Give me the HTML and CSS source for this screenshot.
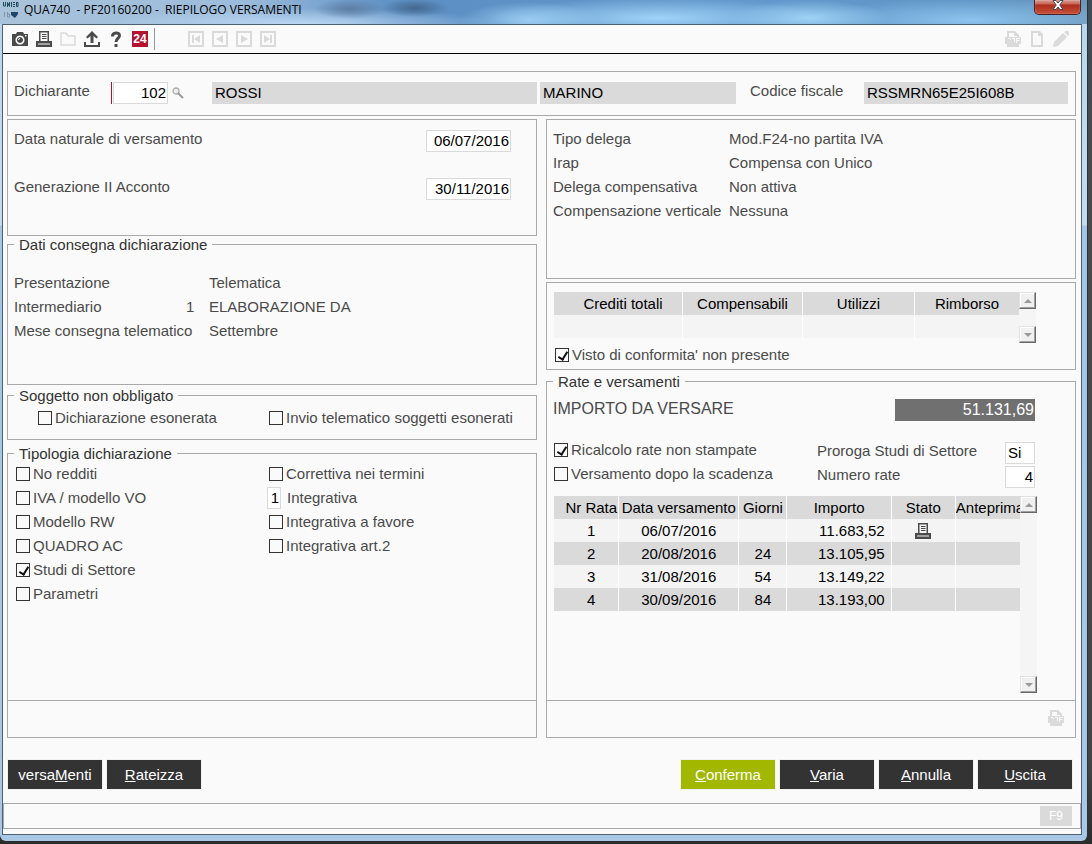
FILE: index.html
```html
<!DOCTYPE html>
<html lang="it">
<head>
<meta charset="utf-8">
<title>QUA740 - Riepilogo versamenti</title>
<link rel="stylesheet" href="styles.css">
</head>
<body>
<svg class="defs" aria-hidden="true">
  <symbol id="i-printer" viewBox="0 0 16 16">
    <path fill="currentColor" fill-rule="evenodd" d="M3 0h10v10h3v6H0v-6h3zM4.500 1.500v8.500h7v-8.500zM2 12.500v1h12v-1z"/>
    <path stroke="currentColor" d="M6 3.500h4.500M6 5.500h4.500M6 7.500h4.500"/>
  </symbol>
  <symbol id="i-pdf" viewBox="0 0 16 16">
    <path fill="currentColor" fill-rule="evenodd" d="M2 0h8l4 4v2h2v7h-2v3H2v-3H0V6h2zM4 2v4h8V5H9V2z"/>
    <path stroke="#fafafa" fill="none" d="M3 7.500h2M5.500 8v1M7 7.500h3M9.500 8v3M11.500 12V7.500H15M12 9.500h2.500"/>
  </symbol>
</svg>
<div class="window">
  <header class="titlebar">
    <svg class="app-icon" width="16" height="16" viewBox="0 0 16 16"><path stroke="#1f4a5c" fill="none" d="M.5 0v4h2V0M4.500 5V.5l2 4V0M8.500 0v5M10 .5h2M10 2.500h2M10 4.500h2M13.500 0v4.500h1.500V.5h-1"/><path stroke="#7d93a8" fill="none" d="M1.500 10v5M4.500 10v5h2v-3h-2"/><path fill="#1f4668" d="M8 10h7v2l-3 4-4-3z"/></svg>
    <h1>QUA740&nbsp; - PF20160200 -&nbsp; RIEPILOGO VERSAMENTI</h1>
    <button class="close" aria-label="Chiudi"><svg width="12" height="10" viewBox="0 0 12 10"><path d="M1 .5h3l2 2.500 2-2.500h3L7.800 5l3.200 4.500H8L6 7 4 9.500H1L4.200 5z" fill="#fff" stroke="#4a4550" stroke-width="1"/></svg></button>
  </header>
  <div class="client">
    <nav class="toolbar">
      <div class="tools">
        <button aria-label="Cattura"><svg viewBox="0 0 16 16"><path fill="currentColor" fill-rule="evenodd" d="M0 3h4l1-2h6l1 2h4v12H0zM8 4.500a4.500 4.500 0 1 0 .01 0zM8 6a3 3 0 1 1-.01 0zM13 4v1.500h1.500V4z"/><path stroke="#fafafa" fill="none" d="M6.500 9A1.500 1.500 0 0 1 8 7.500"/></svg></button>
        <button aria-label="Stampa"><svg><use href="#i-printer"/></svg></button>
        <button class="off" aria-label="Apri"><svg viewBox="0 0 16 16"><path fill="none" stroke="currentColor" stroke-width="1.500" d="M1 2h5l2 3h7v9H1z"/></svg></button>
        <button aria-label="Esporta"><svg viewBox="0 0 16 16"><path fill="currentColor" d="M8 0l6 6-1.500 1.500L9.500 5v7h-3V5l-3 2.500L2 6zM0 11h2v3h12v-3h2v5H0z"/></svg></button>
        <button aria-label="Aiuto"><svg viewBox="0 0 16 16"><path fill="none" stroke="currentColor" stroke-width="3" d="M4.500 5.500C4.300 .800 11.700 .800 11.500 4.800 11.400 7.500 8 7.500 8 11"/><path fill="currentColor" d="M6.500 13h3v3h-3z"/></svg></button>
        <button class="f24">24</button>
      </div>
      <div class="tools off records">
        <button aria-label="Primo"><svg viewBox="0 0 16 16"><path fill="none" stroke="currentColor" stroke-width="2" d="M1 1h14v14H1z"/><path fill="currentColor" d="M4 4h2v8H4zM12 4v8L6 8z"/></svg></button>
        <button aria-label="Precedente"><svg viewBox="0 0 16 16"><path fill="none" stroke="currentColor" stroke-width="2" d="M1 1h14v14H1z"/><path fill="currentColor" d="M11 4v8L4 8z"/></svg></button>
        <button aria-label="Successivo"><svg viewBox="0 0 16 16"><path fill="none" stroke="currentColor" stroke-width="2" d="M1 1h14v14H1z"/><path fill="currentColor" d="M5 4v8l7-4z"/></svg></button>
        <button aria-label="Ultimo"><svg viewBox="0 0 16 16"><path fill="none" stroke="currentColor" stroke-width="2" d="M1 1h14v14H1z"/><path fill="currentColor" d="M10 4h2v8h-2zM4 4v8l6-4z"/></svg></button>
      </div>
      <div class="tools off end">
        <button aria-label="PDF"><svg><use href="#i-pdf"/></svg></button>
        <button aria-label="Nuovo"><svg viewBox="0 0 16 16"><path fill="currentColor" fill-rule="evenodd" d="M2 0h9l3 3v13H2zM4 2v12h8V5H9V2z"/></svg></button>
        <button aria-label="Modifica"><svg viewBox="0 0 16 16"><path fill="currentColor" d="M0 16l1-5L10 2l4 4-9 9zM11 1l1.500-1H15l1 1v2.500L15 5z"/></svg></button>
      </div>
    </nav>

    <main>
      <section class="box declarant">
        <label for="dich">Dichiarante</label>
        <span class="key"><input id="dich" class="num" value="102"></span>
        <button class="lens" aria-label="Cerca"><svg width="12" height="12" viewBox="0 0 12 12"><circle cx="4" cy="4" r="3" fill="#eee" stroke="#aaa" stroke-width="1.300"/><path stroke="#999" stroke-width="2" d="M6 6l5 5"/></svg></button>
        <input class="ro surname" aria-label="Cognome" readonly value="ROSSI">
        <input class="ro name" aria-label="Nome" readonly value="MARINO">
        <label class="code-label" for="cf">Codice fiscale</label>
        <input id="cf" class="ro" readonly value="RSSMRN65E25I608B">
      </section>

      <div class="columns">
        <div class="column">
          <section class="box dates">
            <div class="row"><label for="d1">Data naturale di versamento</label><input id="d1" class="num" value="06/07/2016"></div>
            <div class="row"><label for="d2">Generazione II Acconto</label><input id="d2" class="num" value="30/11/2016"></div>
          </section>
          <fieldset class="delivery">
            <legend>Dati consegna dichiarazione</legend>
            <dl>
              <dt>Presentazione</dt><dd></dd><dd>Telematica</dd>
              <dt>Intermediario</dt><dd>1</dd><dd>ELABORAZIONE DA</dd>
              <dt>Mese consegna telematico</dt><dd></dd><dd>Settembre</dd>
            </dl>
          </fieldset>
          <fieldset class="exempt">
            <legend>Soggetto non obbligato</legend>
            <div class="pair">
              <label class="check inset"><input type="checkbox">Dichiarazione esonerata</label>
              <label class="check"><input type="checkbox">Invio telematico soggetti esonerati</label>
            </div>
          </fieldset>
          <fieldset class="kind grow">
            <legend>Tipologia dichiarazione</legend>
            <div class="pair">
              <div>
                <label class="check"><input type="checkbox">No redditi</label>
                <label class="check"><input type="checkbox">IVA / modello VO</label>
                <label class="check"><input type="checkbox">Modello RW</label>
                <label class="check"><input type="checkbox">QUADRO AC</label>
                <label class="check"><input type="checkbox" checked>Studi di Settore</label>
                <label class="check"><input type="checkbox">Parametri</label>
              </div>
              <div>
                <label class="check"><input type="checkbox">Correttiva nei termini</label>
                <label class="check"><input class="num digit" value="1">Integrativa</label>
                <label class="check"><input type="checkbox">Integrativa a favore</label>
                <label class="check"><input type="checkbox">Integrativa art.2</label>
              </div>
            </div>
            <div class="foot"></div>
          </fieldset>
        </div>

        <div class="column">
          <section class="box options">
            <dl>
              <dt>Tipo delega</dt><dd>Mod.F24-no partita IVA</dd>
              <dt>Irap</dt><dd>Compensa con Unico</dd>
              <dt>Delega compensativa</dt><dd>Non attiva</dd>
              <dt>Compensazione verticale</dt><dd>Nessuna</dd>
            </dl>
          </section>
          <section class="box credits">
            <div class="grid-wrap">
              <table>
                <colgroup><col class="w128"><col class="w120"><col class="w112"><col class="w105"></colgroup>
                <thead><tr><th class="n">Crediti totali</th><th>Compensabili</th><th>Utilizzi</th><th>Rimborso</th></tr></thead>
                <tbody><tr><td></td><td></td><td></td><td></td></tr></tbody>
              </table>
              <div class="scroll"><button class="up" aria-label="Su"></button><button class="down" aria-label="Giù"></button></div>
            </div>
            <label class="check"><input type="checkbox" checked>Visto di conformita' non presente</label>
          </section>
          <fieldset class="rates grow">
            <legend>Rate e versamenti</legend>
            <div class="total"><label for="tot">IMPORTO DA VERSARE</label><input id="tot" readonly value="51.131,69"></div>
            <div class="settings">
              <label class="check"><input type="checkbox" checked>Ricalcolo rate non stampate</label>
              <label for="pro">Proroga Studi di Settore</label><input id="pro" value="Si">
              <label class="check"><input type="checkbox">Versamento dopo la scadenza</label>
              <label for="nr">Numero rate</label><input id="nr" class="num" value="4">
            </div>
            <div class="grid-wrap grow">
              <table>
                <colgroup><col class="w64"><col class="w120"><col class="w48"><col class="w104"><col class="w64"><col class="w65"></colgroup>
                <thead><tr><th class="r">Nr Rata</th><th>Data versamento</th><th>Giorni</th><th>Importo</th><th>Stato</th><th class="l">Anteprima</th></tr></thead>
                <tbody>
                  <tr><td class="n">1</td><td>06/07/2016</td><td></td><td class="amount">11.683,52</td><td><svg class="state" width="16" height="16"><use href="#i-printer"/></svg></td><td></td></tr>
                  <tr><td class="n">2</td><td>20/08/2016</td><td>24</td><td class="amount">13.105,95</td><td></td><td></td></tr>
                  <tr><td class="n">3</td><td>31/08/2016</td><td>54</td><td class="amount">13.149,22</td><td></td><td></td></tr>
                  <tr><td class="n">4</td><td>30/09/2016</td><td>84</td><td class="amount">13.193,00</td><td></td><td></td></tr>
                </tbody>
              </table>
              <div class="scroll"><button class="up" aria-label="Su"></button><button class="down" aria-label="Giù"></button></div>
            </div>
            <div class="foot"><button class="pdf" aria-label="PDF"><svg width="16" height="16"><use href="#i-pdf"/></svg></button></div>
          </fieldset>
        </div>
      </div>

      <div class="actions">
        <button>versa<u>M</u>enti</button>
        <button><u>R</u>ateizza</button>
        <button class="primary"><u>C</u>onferma</button>
        <button><u>V</u>aria</button>
        <button><u>A</u>nnulla</button>
        <button><u>U</u>scita</button>
      </div>
    </main>
    <footer class="status"><button>F9</button></footer>
  </div>
</div>
</body>
</html>
```
FILE: styles.css
```css
* { box-sizing: border-box; }
body {
  margin: 0;
  min-height: 100vh;
  display: flex;
  padding: 0 4px 3px 0;
  background: linear-gradient(#3c4b58, #4a4a4a 20%, #454545 90%, #2c2c2c);
  font: 15px/24px "Liberation Sans", Arial, sans-serif;
  color: #4a4a4a;
}
button, input { font: inherit; margin: 0; padding: 0; border: 0; border-radius: 0; }
button { background: none; }
.defs { position: absolute; width: 0; height: 0; }

.window {
  flex: 1;
  display: flex;
  flex-direction: column;
  padding: 0 5px 6px 2px;
  border-radius: 0 0 6px 6px;
  border-right: 1px solid #26323c;
  background: linear-gradient(#b9d6ee, #c4dcf0 225px, #a3c6e6 226px, #a9c8e6);
}
.titlebar {
  display: flex;
  align-items: flex-start;
  height: 24px;
  margin: 0 -5px 0 -2px;
  padding: 0 6px 0 3px;
  background:
    radial-gradient(ellipse 36px 10px at 350px 9px, #5d7ea3 0, transparent 100%),
    radial-gradient(ellipse 34px 9px at 415px 8px, #44688f 0, transparent 100%),
    radial-gradient(ellipse 70px 18px at 530px 20px, #9bcdf2, transparent),
    radial-gradient(ellipse 170px 20px at 660px 18px, #9fd3f8, transparent),
    radial-gradient(ellipse 80px 18px at 810px 18px, #9fd3f5, transparent),
    radial-gradient(ellipse 160px 22px at 970px 20px, #8cc4ee, transparent),
    radial-gradient(ellipse 200px 16px at 300px 24px, #bcd8f4, transparent),
    linear-gradient(90deg, #a9c3da, #9cbcdc 240px, #5c8fc3 400px, #6298cc 70%, #5e94c4 90%, #6e97b8);
}
.titlebar h1 {
  flex: 1;
  margin: 0 0 0 5px;
  font: 12px/20px "Open Sans", "Noto Sans", sans-serif;
  color: #000;
}
.app-icon { margin-top: 2px; }
.close {
  display: flex;
  justify-content: center;
  width: 47px;
  height: 15px;
  border: 1px solid #46222a;
  border-top: 0;
  border-radius: 0 0 5px 5px;
  background: linear-gradient(#d9a096, #c5604f 30%, #ad2c1c 35%, #c8503a);
  box-shadow: inset 0 0 1px #fff;
}

.client {
  flex: 1;
  display: flex;
  flex-direction: column;
  border: 1px solid #4d6072;
  background: #fafafa;
  padding-bottom: 5px;
}
.toolbar {
  display: flex;
  align-items: center;
  height: 29px;
  padding: 0 12px 0 9px;
  border-bottom: 1px solid #000;
}
.tools { display: flex; gap: 8px; color: #4a4a4a; }
.tools button { display: block; width: 16px; height: 16px; color: inherit; }
.tools svg { display: block; width: 16px; height: 16px; }
.tools.off, .tools .off { color: #dadada; }
.tools .f24 {
  background: #b4122f;
  color: #fff;
  font-size: 12px;
  font-weight: bold;
  line-height: 16px;
  text-align: center;
}
.records { margin-left: 6px; padding-left: 33px; border-left: 1px solid #999; height: 22px; align-items: center; }
.end { margin-left: auto; }

main {
  flex: 1;
  display: flex;
  flex-direction: column;
  padding: 17px 5px 13px 4px;
}
.box, fieldset { border: 1px solid #a9a9a9; margin: 0; min-width: 0; }
input:not([type=checkbox]) {
  height: 22px;
  padding: 0 1px 1px 2px;
  border: 1px solid #dadada;
  background: #fff;
  color: #000;
}
input.num { text-align: right; }
input.ro { background: #dadada; }

.declarant { display: flex; padding: 10px 7px 11px 6px; }
.declarant label { line-height: 18px; white-space: nowrap; }
.declarant label:first-child { width: 97px; }
.key { display: flex; padding-left: 1px; border-left: 1px solid #b4122f; }
.key input { width: 55px; }
.lens { margin: 5px 28px 0 4px; height: 12px; line-height: 0; }
.surname { flex: 327 1 0; min-width: 0; }
.name { flex: 195 1 0; min-width: 0; margin: 0 14px 0 3px; }
.declarant .code-label { width: 114px; }
#cf { width: 204px; }

.columns {
  flex: 1;
  display: grid;
  grid-template-columns: 1fr 1fr;
  gap: 9px;
  margin-top: 3px;
}
.column { display: flex; flex-direction: column; min-width: 0; }
.grow { flex: 1; }
fieldset { display: flex; flex-direction: column; padding: 0 6px; }
legend { padding: 0 5px; line-height: 17px; color: #333; }
dl { display: grid; margin: 0; white-space: nowrap; }
dd { margin: 0; }

.dates { display: grid; gap: 24px; padding: 8px 25px 35px 6px; }
.row { display: flex; justify-content: space-between; height: 24px; }
.row label { line-height: 22px; }
.row input { width: 85px; align-self: flex-end; }
.delivery { padding: 18px 6px 41px; }
.delivery dl { grid-template-columns: 172px 23px 1fr; }
.exempt { margin-top: 2px; padding: 2px 6px 9px; }
.kind { margin-top: 5px; }
.pair { display: grid; grid-template-columns: 253px 1fr; padding-left: 2px; }
.check { display: flex; align-items: center; gap: 3px; white-space: nowrap; }
.check.inset { padding-left: 22px; }
input[type=checkbox] {
  appearance: none;
  position: relative;
  width: 14px;
  height: 14px;
  margin-bottom: 1px;
  border: 1px solid #333;
  background: #fafafa;
}
input[type=checkbox]:checked::after {
  content: "";
  position: absolute;
  left: 4px;
  top: 1px;
  width: 4px;
  height: 8px;
  border: solid #111;
  border-width: 0 2px 2px 0;
  transform: rotate(32deg);
}
.check .digit { width: 14px; margin: 0 3px 0 -2px; }
.foot {
  display: flex;
  justify-content: flex-end;
  align-items: center;
  height: 37px;
  margin: auto -6px 0;
  padding-right: 11px;
  border-top: 1px solid #a9a9a9;
}
.foot button { color: #dadada; height: 16px; margin-bottom: 3px; line-height: 0; }

.options { padding: 7px 6px 55px; }
.options dl { grid-template-columns: 176px 1fr; }
.credits { margin-top: 3px; padding: 9px 7px 2px; }
.credits .check, .settings .check { padding-left: 1px; }
.grid-wrap { display: flex; align-items: flex-start; margin-right: 32px; }
table {
  width: 100%;
  min-width: 0;
  table-layout: fixed;
  border-collapse: separate;
  border-spacing: 0;
  line-height: 23px;
  color: #000;
}
th, td {
  height: 23px;
  padding: 0;
  font-weight: normal;
  text-align: center;
  white-space: nowrap;
  overflow: hidden;
}
th + th, td + td { border-left: 1px solid #fff; }
th { background: #dadada; }
td { background: #f4f4f4; }
tr:nth-child(even) td { background: #dadada; }
th.r { text-align: right; padding-right: 1px; }
th.l { text-align: left; }
.n { padding-left: 10px; }
td.amount { text-align: right; padding-right: 6px; }
.state { display: block; margin: auto; color: #4a4a4a; }
.w128 { width: 128px; } .w120 { width: 120px; } .w112 { width: 112px; } .w105 { width: 105px; }
.w64 { width: 64px; } .w48 { width: 48px; } .w104 { width: 104px; } .w65 { width: 65px; }
.scroll {
  display: flex;
  flex: none;
  flex-direction: column;
  justify-content: space-between;
  align-self: stretch;
  width: 17px;
  min-height: 51px;
  background: #f5f5f5;
}
.scroll button {
  display: grid;
  place-items: center;
  height: 17px;
  background: #f0f0f0;
  border: 1px solid;
  border-color: #e3e3e3 #696969 #696969 #e3e3e3;
  box-shadow: inset -1px -1px #a0a0a0, inset 1px 1px #fff;
}
.scroll button::before { content: ""; border: solid transparent; border-width: 0 4px; }
.scroll .up::before { border-bottom: 4px solid #999; }
.scroll .down::before { border-top: 4px solid #999; }

.rates { margin-top: 3px; }
.total { display: flex; justify-content: space-between; padding: 9px 34px 0 0; font-size: 16px; }
.total label { line-height: 19px; }
.total input:not([type=checkbox]) { width: 140px; border: 0; background: #707070; color: #fff; text-align: right; }
.settings {
  display: grid;
  grid-template-columns: 264px 1fr 30px;
  grid-auto-rows: 24px;
  margin: 19px 34px 8px 0;
  line-height: 22px;
}
.settings .check { height: 20px; }
.settings input:not([type=checkbox]) { width: 30px; align-self: end; }
.rates .grid-wrap { margin: 0 32px 7px 1px; }

.actions { display: flex; gap: 3px; margin-top: 21px; padding-right: 3px; }
.actions button {
  width: 96px;
  height: 31px;
  border: 1px solid #f0f0f0;
  background: #333;
  color: #fff;
}
.actions .primary { margin-left: auto; background: #a2b800; }

.status {
  display: flex;
  justify-content: flex-end;
  align-items: center;
  height: 26px;
  padding-right: 8px;
  border: 1px solid #a9a9a9;
}
.status button { width: 32px; height: 20px; background: #dadada; color: #fff; font-size: 12px; line-height: 20px; }
```
